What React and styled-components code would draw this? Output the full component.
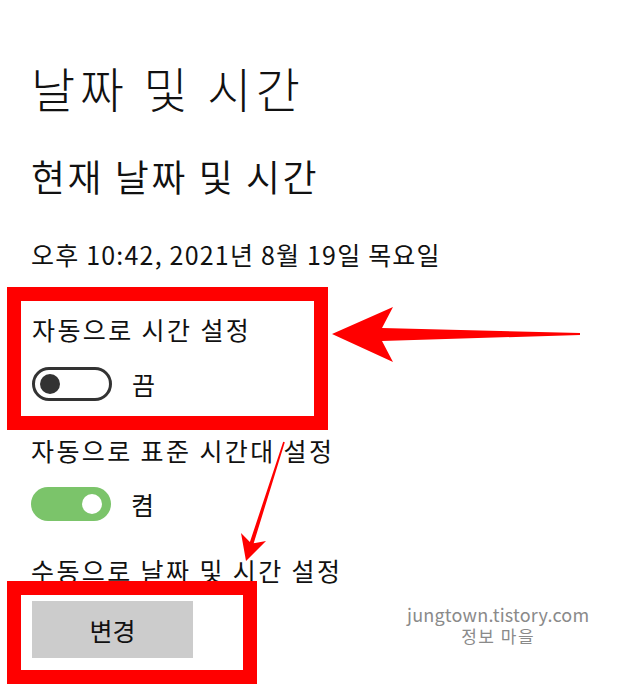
import React from 'react'
import styled, { createGlobalStyle } from 'styled-components'

const GlobalStyle = createGlobalStyle`
    html, body {
        margin: 0;
        padding: 0;
        background: #ffffff;
    }
    body {
        font-family: "Noto Sans CJK KR", "Noto Sans", sans-serif;
        color: #111111;
    }
`

const Page = styled.div`
    position: relative;
    width: 634px;
    height: 700px;
    box-sizing: border-box;
    padding: 57px 0 0 31px;
    overflow: hidden;
    background: #ffffff;
`

const Title = styled.h1`
    margin: 0;
    font-size: 48px;
    line-height: 60px;
    font-weight: 300;
    letter-spacing: 4.5px;
`

const Subtitle = styled.h2`
    margin: 36px 0 0;
    font-size: 37px;
    line-height: 46px;
    font-weight: 350;
    letter-spacing: 2.5px;
`

const DateText = styled.div`
    margin-top: 38px;
    font-size: 25px;
    line-height: 34px;
    letter-spacing: 1.2px;
`

const Highlight = styled.div`
    position: relative;
    box-sizing: border-box;
    width: ${({ $width }) => $width}px;
    margin: ${({ $top }) => $top}px 0 0 -24px;
    padding: ${({ $pad }) => $pad};
    border: 14px solid #ff0000;
`

const Label = styled.div`
    margin-top: ${({ $top }) => $top || 0}px;
    font-size: 25px;
    line-height: 34px;
    letter-spacing: 2.4px;
`

const ToggleRow = styled.div`
    display: flex;
    align-items: center;
    gap: 20px;
    margin-top: ${({ $top }) => $top}px;
    height: 34px;
`

const Toggle = styled.div`
    position: relative;
    box-sizing: border-box;
    width: 80px;
    height: 34px;
    border-radius: 17px;
    border: ${({ $on }) => ($on ? 'none' : '3px solid #333333')};
    background: ${({ $on }) => ($on ? '#7bc46a' : '#ffffff')};
    display: flex;
    align-items: center;
    justify-content: ${({ $on }) => ($on ? 'flex-end' : 'flex-start')};
    padding: 0 ${({ $on }) => ($on ? '9px' : '5px')};
`

const Knob = styled.span`
    width: 20px;
    height: 20px;
    border-radius: 50%;
    background: ${({ $on }) => ($on ? '#ffffff' : '#333333')};
`

const State = styled.span`
    font-size: 25px;
    line-height: 34px;
`

const BottomRow = styled.div`
    display: flex;
    align-items: flex-start;
`

const ChangeButton = styled.button`
    width: 161px;
    height: 57px;
    border: none;
    background: #cccccc;
    font-family: inherit;
    font-size: 25px;
    color: #111111;
    padding: 0;
    cursor: pointer;
`

const Watermark = styled.div`
    margin: 17px 0 0 150px;
    text-align: center;
    color: #8a8a8a;
`

const WatermarkLine = styled.div`
    font-size: ${({ $size }) => $size}px;
    line-height: 21px;
    letter-spacing: ${({ $spacing }) => $spacing}px;
`

const Arrows = styled.svg`
    position: absolute;
    left: 0;
    top: 0;
    pointer-events: none;
`

const App = () => {
    return (
        <>
            <GlobalStyle />
            <Page>
                <Title>날짜 및 시간</Title>
                <Subtitle>현재 날짜 및 시간</Subtitle>
                <DateText>오후 10:42, 2021년 8월 19일 목요일</DateText>

                <Highlight $width={321} $top={16} $pad="11px 0 15px 11px">
                    <Label>자동으로 시간 설정</Label>
                    <ToggleRow $top={21}>
                        <Toggle><Knob /></Toggle>
                        <State>끔</State>
                    </ToggleRow>
                </Highlight>

                <Label $top={3}>자동으로 표준 시간대 설정</Label>
                <ToggleRow $top={20}>
                    <Toggle $on><Knob $on /></Toggle>
                    <State>켬</State>
                </ToggleRow>

                <Label $top={32}>수동으로 날짜 및 시간 설정</Label>
                <BottomRow>
                    <Highlight $width={250} $top={-6} $pad="6px 0 12px 11px">
                        <ChangeButton>변경</ChangeButton>
                    </Highlight>
                    <Watermark>
                        <WatermarkLine $size={18} $spacing={0.2}>jungtown.tistory.com</WatermarkLine>
                        <WatermarkLine $size={17} $spacing={1.5}>정보 마을</WatermarkLine>
                    </Watermark>
                </BottomRow>

                <Arrows width="634" height="700" viewBox="0 0 634 700">
                    <polygon
                        fill="#ff0000"
                        points="332,334 393,307 382,328 580,333 580,335 382,341 393,362"
                    />
                    <polygon
                        fill="#ff0000"
                        points="283.2,441.8 284.8,442.2 253.7,543.3 266,541 246,561 241,533 249.9,542.1"
                    />
                </Arrows>
            </Page>
        </>
    )
}

export default App
